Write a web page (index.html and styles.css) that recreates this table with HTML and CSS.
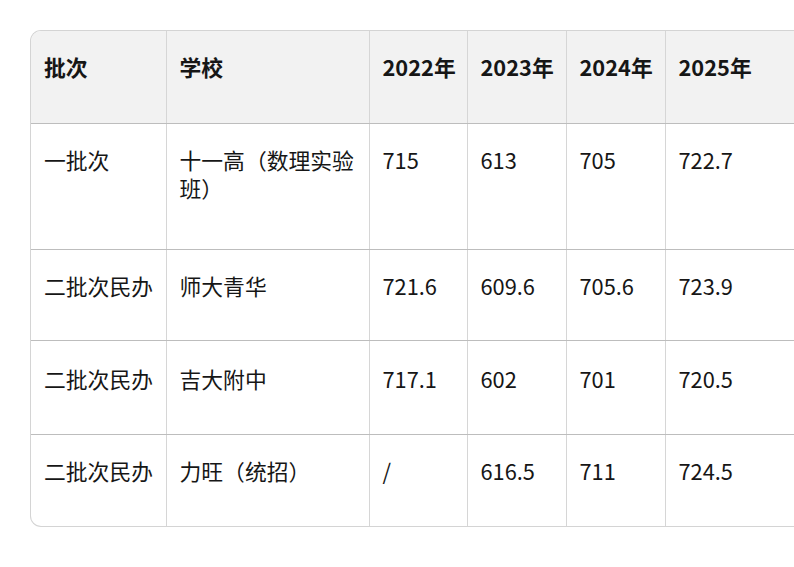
FILE: index.html
```html
<!DOCTYPE html>
<html lang="zh">
<head>
<meta charset="utf-8">
<link rel="stylesheet" href="styles.css">
</head>
<body>
<div class="wrap">
<table class="grid">
<colgroup>
<col class="c1"><col class="c2"><col class="c3"><col class="c4"><col class="c5"><col class="c6">
</colgroup>
<thead>
<tr class="h"><th>批次</th><th>学校</th><th>2022年</th><th>2023年</th><th>2024年</th><th>2025年</th></tr>
</thead>
<tbody>
<tr class="r1"><td>一批次</td><td>十一高（数理实验班）</td><td>715</td><td>613</td><td>705</td><td>722.7</td></tr>
<tr class="r2"><td>二批次民办</td><td>师大青华</td><td>721.6</td><td>609.6</td><td>705.6</td><td>723.9</td></tr>
<tr class="r3"><td>二批次民办</td><td>吉大附中</td><td>717.1</td><td>602</td><td>701</td><td>720.5</td></tr>
<tr class="r4"><td>二批次民办</td><td>力旺（统招）</td><td>/</td><td>616.5</td><td>711</td><td>724.5</td></tr>
</tbody>
</table>
</div>
</body>
</html>
```
FILE: styles.css
```css
html, body {
  margin: 0;
  padding: 0;
  background: #ffffff;
  overflow: hidden;
  width: 794px;
  height: 567px;
}
body {
  padding: 30px 0 0 30px;
  box-sizing: border-box;
  font-family: "Noto Sans CJK SC", "Noto Sans", sans-serif;
  color: #161616;
}
.wrap {
  width: 764px;
  box-sizing: border-box;
  border: 1px solid #d4d4d4;
  border-right: none;
  border-radius: 11px 0 0 11px;
  overflow: hidden;
}
.grid {
  border-collapse: collapse;
  table-layout: fixed;
  width: 763px;
}
.c1 { width: 135px; }
.c2 { width: 203px; }
.c3 { width: 98px; }
.c4 { width: 99px; }
.c5 { width: 99px; }
.c6 { width: 129px; }
th, td {
  text-align: left;
  vertical-align: top;
  padding: 22px 8px 0 13px;
  font-size: 21.8px;
  line-height: 28px;
  white-space: normal;
  border-right: 1px solid #d6d6d6;
  border-bottom: 1.5px solid #bdbdbd;
  box-sizing: border-box;
}
th:last-child, td:last-child { border-right: none; }
tbody tr:last-child td { border-bottom: none; }
th {
  background: #f2f2f2;
  font-weight: 700;
}
td { font-weight: 400; }
.h { height: 92px; }
.r1 { height: 126px; }
.r2 { height: 91px; }
.r3 { height: 94px; }
.r4 { height: 92px; }
.r3 td { padding-top: 24px; }
```
